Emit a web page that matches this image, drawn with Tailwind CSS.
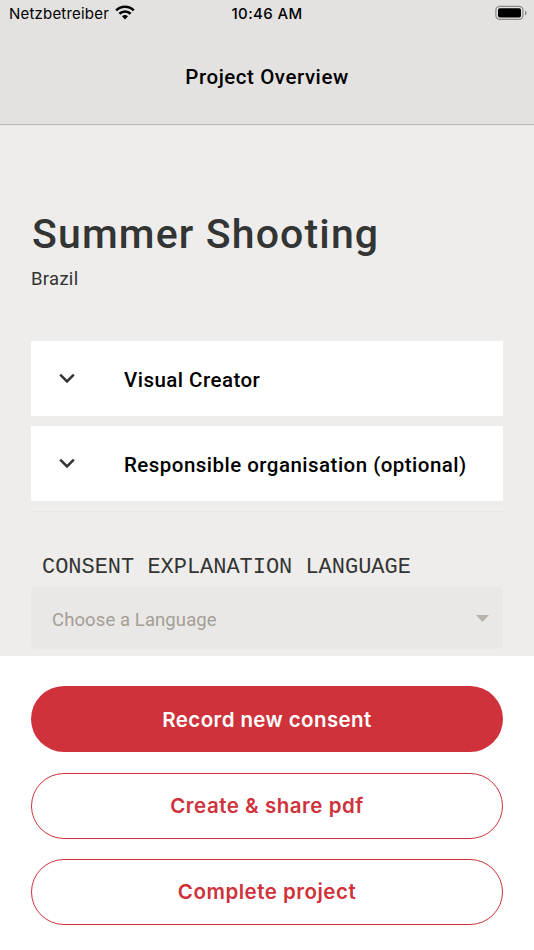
<!DOCTYPE html>
<html lang="en">
<head>
<meta charset="utf-8">
<title>Project Overview</title>
<script src="https://cdn.jsdelivr.net/npm/@tailwindcss/browser@4"></script>
</head>
<body class="w-[534px] h-[950px] overflow-hidden flex flex-col bg-[#eeedeb] font-['Roboto',sans-serif] text-black">
  <header class="h-[125px] shrink-0 bg-[#e3e2e0] border-b border-[#b7b6b5] flex flex-col">
    <div class="h-7 grid grid-cols-3 items-center pl-[9px] pr-[7px] font-['Inter',sans-serif]">
      <div class="flex items-center gap-[6px]">
        <span class="text-[15px] leading-7 tracking-[0.2px]">Netzbetreiber</span>
        <svg class="w-5 h-[15px] shrink-0 -mt-[3px]" viewBox="0 0 20 15" fill="none" stroke="black" stroke-width="2.6">
          <path d="M1.2 5.4a12.6 12.6 0 0 1 17.6 0"/>
          <path d="M4.4 8.8a8 8 0 0 1 11.2 0"/>
          <path d="M7 11.3a4.4 4.4 0 0 1 6 0L10 14.4z" fill="black" stroke="none"/>
        </svg>
      </div>
      <span class="-ml-[2px] text-center text-[15px] font-medium leading-7 tracking-[0.35px]">10:46 AM</span>
      <svg class="justify-self-end w-8 h-4 -mt-[2px]" viewBox="0 0 32 16">
        <rect x=".9" y="1.3" width="27" height="13" rx="3.8" fill="none" stroke="#8d8c8b" stroke-width="1.3"/>
        <rect x="3" y="3.3" width="23" height="9.2" rx="1.8" fill="black"/>
        <path d="M30 5.4c2.2.8 2.2 4.2 0 5z" fill="#8d8c8b"/>
      </svg>
    </div>
    <h1 class="flex-1 pt-px text-center text-[20.5px] leading-[96px] font-medium tracking-[0.55px]">Project Overview</h1>
  </header>

  <main class="h-[531px] shrink-0 overflow-hidden px-[31px] flex flex-col border-t border-[#e6e5e3]">
    <h2 class="mt-[82px] pt-px pl-px text-[41px] leading-[51px] font-medium tracking-[1.15px] text-[#333534] whitespace-nowrap">Summer Shooting</h2>
    <p class="mt-[7px] text-[18.5px] leading-6 tracking-[0.3px] text-[#333534]">Brazil</p>
    <section class="mt-[50px] flex flex-col gap-[10px]">
      <div class="h-[75px] bg-white flex items-center pl-7">
        <svg class="w-4 h-[11px]" viewBox="0 0 16 11" fill="none" stroke="#333534" stroke-width="2.5"><path d="M1.2 1.7 8 8.5l6.8-6.8"/></svg>
        <span class="ml-[49px] mt-[4px] text-[20.5px] font-medium tracking-[0.47px]">Visual Creator</span>
      </div>
      <div class="h-[75px] bg-white flex items-center pl-7">
        <svg class="w-4 h-[11px]" viewBox="0 0 16 11" fill="none" stroke="#333534" stroke-width="2.5"><path d="M1.2 1.7 8 8.5l6.8-6.8"/></svg>
        <span class="ml-[49px] mt-[4px] text-[20.5px] font-medium tracking-[0.47px]">Responsible organisation (optional)</span>
      </div>
    </section>
    <div class="mt-[10px] h-px shrink-0 bg-[#e7e6e4]"></div>
    <h3 class="mt-[42px] pl-[11px] text-[22px] leading-7 tracking-[-0.03px] font-['Liberation_Mono',monospace] text-[#333534] whitespace-nowrap">CONSENT EXPLANATION LANGUAGE</h3>
    <div class="mt-[5px] h-[62px] shrink-0 rounded-[5px] bg-[#e9e8e6] flex items-center justify-between pl-[21px] pr-[14px]">
      <span class="mt-[5px] text-[18.5px] tracking-[0.1px] text-[#a59e96]">Choose a Language</span>
      <svg class="w-[13px] h-[7px]" viewBox="0 0 13 7"><path d="M0 0h13L6.5 7z" fill="#b9b3ad"/></svg>
    </div>
  </main>

  <footer class="flex-1 bg-white px-[31px] pt-[30.3px] flex flex-col gap-[20.5px] font-['Inter',sans-serif] text-[20.5px] font-semibold text-[#cf323a]">
    <button class="h-[66px] shrink-0 rounded-full bg-[#cf323a] text-white tracking-[0.4px] pt-[2px]">Record new consent</button>
    <button class="h-[66px] shrink-0 rounded-full border border-[#cf323a] tracking-[0.53px] pt-px">Create &amp; share pdf</button>
    <button class="h-[66px] shrink-0 rounded-full border border-[#cf323a] tracking-[0.5px] pt-px">Complete project</button>
  </footer>
</body>
</html>
